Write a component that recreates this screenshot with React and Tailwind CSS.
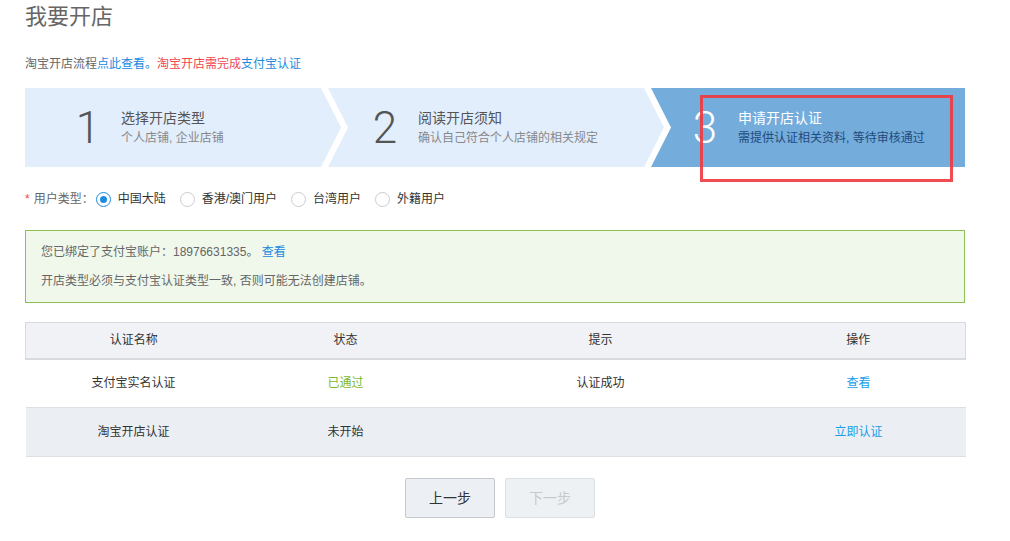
import React from "react";

const FONT = { fontFamily: '"Liberation Sans", "Noto Sans CJK SC", sans-serif' };

const STEPS = [
  { n: "1", title: "选择开店类型", sub: "个人店铺, 企业店铺", w: "w-[316px]", pl: "pl-[41px]", first: true },
  { n: "2", title: "阅读开店须知", sub: "确认自己符合个人店铺的相关规定", w: "w-[336px] -ml-[13px]", pl: "pl-[35px]" },
  { n: "3", title: "申请开店认证", sub: "需提供认证相关资料, 等待审核通过", w: "w-[314px] -ml-[13px]", pl: "pl-[32px]", active: true, last: true },
];

function clipFor(s) {
  if (s.first) return "polygon(0 0, calc(100% - 20px) 0, 100% 50%, calc(100% - 20px) 100%, 0 100%)";
  if (s.last) return "polygon(0 0, 100% 0, 100% 100%, 0 100%, 20px 50%)";
  return "polygon(0 0, calc(100% - 20px) 0, 100% 50%, calc(100% - 20px) 100%, 0 100%, 20px 50%)";
}

function Steps() {
  return (
    <div className="relative mt-[14px] flex h-[79px] w-[940px]">
      {STEPS.map((s) => (
        <div
          key={s.n}
          style={{ clipPath: clipFor(s) }}
          className={`flex h-full shrink-0 items-center ${s.w} ${s.pl} ${s.active ? "bg-[#74acdc]" : "bg-[#e2eefc]"}`}
        >
          <div
            className={`w-[44px] text-center text-[44px] font-light leading-none ${s.active ? "text-white" : "text-[#555]"}`}
            style={{ fontFamily: 'Roboto, "Liberation Sans", sans-serif' }}
          >
            {s.n}
          </div>
          <div className="ml-[11px] flex flex-col">
            <div className={`text-[14px] leading-[20px] ${s.active ? "text-white" : "text-[#555]"}`}>{s.title}</div>
            <div className={`mt-[1px] text-[12px] leading-[18px] ${s.active ? "text-[#1f4b7a]" : "text-[#888]"}`}>{s.sub}</div>
          </div>
        </div>
      ))}
      {/* annotation box */}
      <div className="pointer-events-none absolute left-[675px] top-[7px] h-[87px] w-[253px] border-[3px] border-[#f0393e]/90" />
    </div>
  );
}

function Radio({ checked, label }) {
  return (
    <label className="flex items-center">
      <span
        className={`flex h-[15px] w-[15px] items-center justify-center rounded-full border ${
          checked ? "border-[#1d8ce0]" : "border-[#c8ccd2]"
        } bg-white`}
      >
        {checked && <span className="h-[7px] w-[7px] rounded-full bg-[#1d8ce0]" />}
      </span>
      <span className="ml-[7px] text-[#333]">{label}</span>
    </label>
  );
}

const ROWS = [
  { name: "支付宝实名认证", status: "已通过", statusCls: "text-[#7cb82f]", tip: "认证成功", op: "查看", bg: "bg-white" },
  { name: "淘宝开店认证", status: "未开始", statusCls: "text-[#333]", tip: "", op: "立即认证", bg: "bg-[#ebeff4]" },
];

export default function App() {
  return (
    <div className="min-h-[541px] w-[1010px] bg-white px-[25px]" style={FONT}>
      <div className="h-[33px] text-[22px] leading-[33px] text-[#666]">我要开店</div>

      <div className="mt-[21px] text-[12px] leading-[20px] text-[#666]">
        淘宝开店流程<span className="text-[#1a8ae0]">点此查看。</span>
        <span className="text-[#f0484f]">淘宝开店需完成</span>
        <span className="text-[#1a8ae0]">支付宝认证</span>
      </div>

      <Steps />

      <div className="mt-[22px] flex h-[20px] items-center text-[12px]">
        <span className="mr-[4px] text-[#f0484f]">*</span>
        <span className="mr-[2px] text-[#666]">用户类型：</span>
        <div className="flex items-center gap-[14px]">
          <Radio checked label="中国大陆" />
          <Radio label="香港/澳门用户" />
          <Radio label="台湾用户" />
          <Radio label="外籍用户" />
        </div>
      </div>

      <div className="mt-[21px] flex h-[73px] w-[940px] flex-col justify-center gap-[9px] border border-[#8cc152] bg-[#f0f8ec] px-[15px] text-[12px] leading-[20px] text-[#666]">
        <div>
          您已绑定了支付宝账户：18976631335。 <span className="text-[#1a8ae0]">查看</span>
        </div>
        <div>开店类型必须与支付宝认证类型一致, 否则可能无法创建店铺。</div>
      </div>

      <table className="mt-[19px] w-[940px] table-fixed border-collapse text-[12px] text-[#333]">
        <colgroup>
          <col className="w-[216px]" />
          <col className="w-[208px]" />
          <col className="w-[302px]" />
          <col className="w-[214px]" />
        </colgroup>
        <thead>
          <tr className="h-[36px] border border-b-2 border-[#d7dade] bg-[#f0f2f6]">
            <th className="font-normal">认证名称</th>
            <th className="font-normal">状态</th>
            <th className="font-normal">提示</th>
            <th className="font-normal">操作</th>
          </tr>
        </thead>
        <tbody>
          {ROWS.map((r) => (
            <tr key={r.name} className={`h-[49px] border-b border-[#dcdfe3] text-center ${r.bg}`}>
              <td>{r.name}</td>
              <td className={r.statusCls}>{r.status}</td>
              <td>{r.tip}</td>
              <td className="text-[#1a9ee8]">{r.op}</td>
            </tr>
          ))}
        </tbody>
      </table>

      <div className="mt-[21px] flex w-[940px] justify-center gap-[10px] pl-[10px]">
        <button className="h-[40px] w-[90px] rounded-[2px] border border-[#c5c9ce] bg-[#eceff3] text-[14px] text-[#333]">
          上一步
        </button>
        <button disabled className="h-[40px] w-[90px] rounded-[2px] border border-[#dde0e3] bg-[#eef1f4] text-[14px] text-[#c8c8c8]">
          下一步
        </button>
      </div>
    </div>
  );
}
